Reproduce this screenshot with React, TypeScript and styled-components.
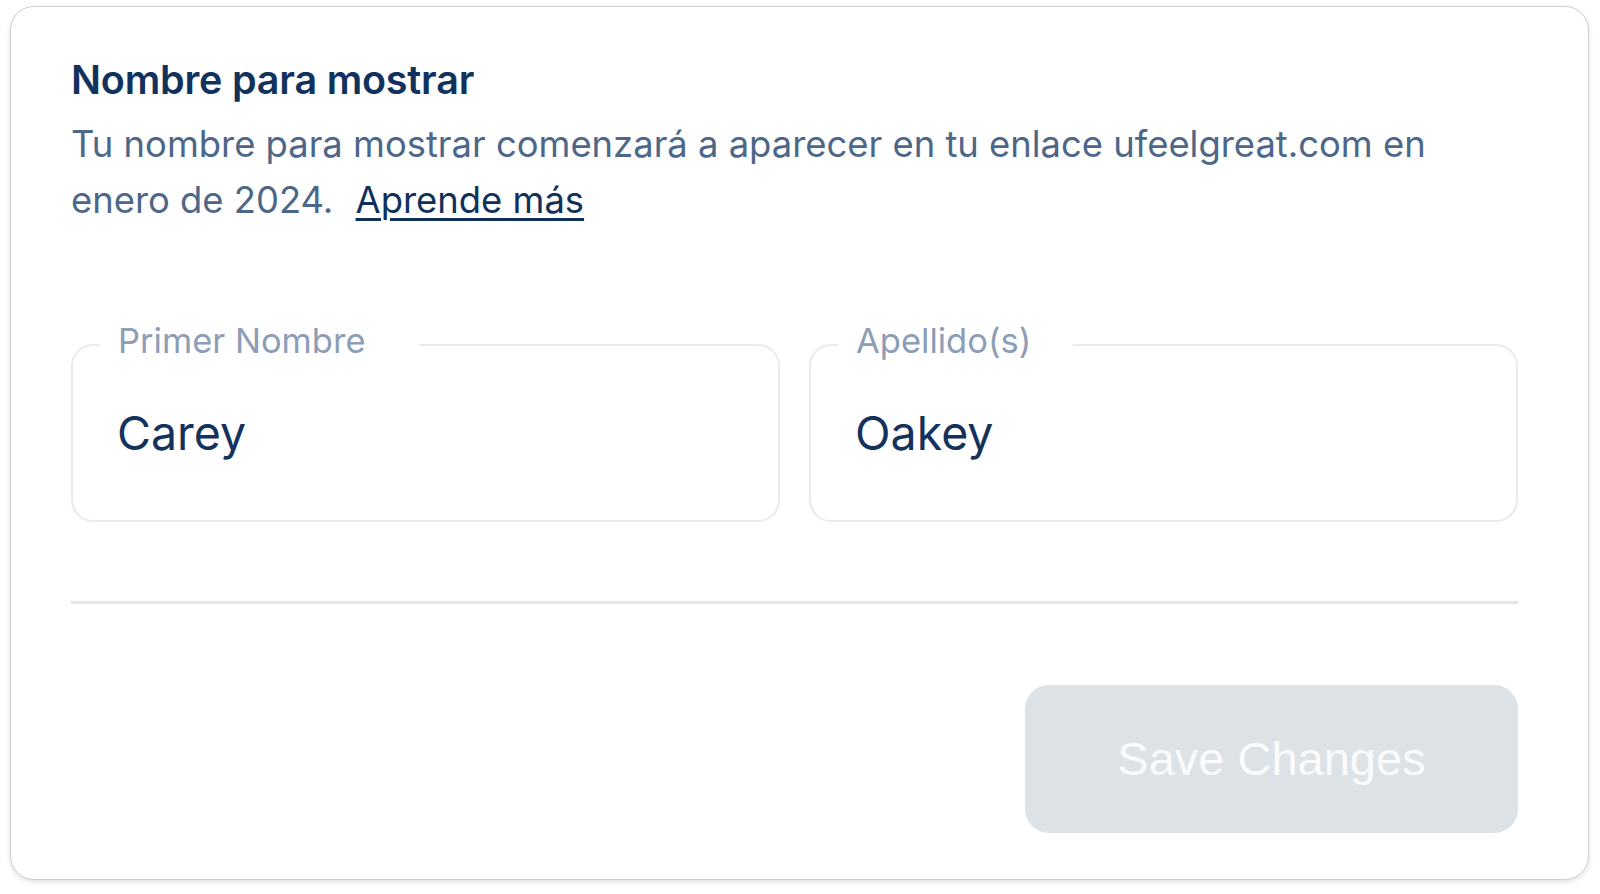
import React from "react";
import styled, { createGlobalStyle } from "styled-components";

const GlobalStyle = createGlobalStyle`
  html, body {
    margin: 0;
    padding: 0;
    background: #ffffff;
  }
  * { box-sizing: border-box; }
`;

const Page = styled.div`
  padding: 6px 11px 14px 10px;
  font-family: Inter, "Noto Sans", sans-serif;
`;

const Card = styled.section`
  background: #ffffff;
  border: 1px solid #cfcfcf;
  border-radius: 24px;
  box-shadow: 0 2px 5px rgba(0, 0, 0, 0.12);
  padding: 50px 70px 46px 60px;
  display: flex;
  flex-direction: column;
`;

const Title = styled.h2`
  margin: 0;
  font-size: 39.5px;
  line-height: 46.8px;
  font-weight: 600;
  color: #12325e;
  letter-spacing: -0.2px;
`;

const Description = styled.p`
  margin: 12px 0 0;
  font-size: 36.4px;
  line-height: 56px;
  font-weight: 400;
  color: #4d6788;
`;

const LearnLink = styled.a`
  margin-left: 12px;
  color: #10305c;
  text-decoration: underline;
  text-decoration-thickness: 2.5px;
  text-underline-offset: 5px;
  cursor: pointer;
`;

const Fields = styled.div`
  margin-top: 99px;
  display: grid;
  grid-template-columns: 1fr 1fr;
  gap: 29px;
`;

const Field = styled.fieldset`
  margin: 0;
  padding: 0 0 0 27px;
  border: 2px solid #e7eaee;
  border-radius: 22px;
  min-width: 0;
`;

const Legend = styled.legend<{ $tail: number }>`
  padding: 0 ${(p) => p.$tail}px 8px 18px;
  font-size: 34.5px;
  line-height: 28px;
  color: #8c9db5;
  font-weight: 400;
`;

const ValueInput = styled.input`
  display: block;
  width: 100%;
  margin: 42px 0 59px;
  padding: 0 0 0 17px;
  height: 56px;
  border: none;
  outline: none;
  background: transparent;
  font-family: Inter, "Noto Sans", sans-serif;
  font-size: 46.5px;
  line-height: 56px;
  color: #14325c;
`;

const Divider = styled.hr`
  margin: 79px 0 0;
  border: none;
  height: 3px;
  background: #e4e4e4;
`;

const Actions = styled.div`
  margin-top: 81px;
  display: flex;
  justify-content: flex-end;
`;

const SaveButton = styled.button`
  width: 493px;
  height: 148px;
  border: none;
  border-radius: 24px;
  background: #dde2e6;
  color: #fafbfc;
  font-family: "Liberation Sans", Arial, sans-serif;
  font-size: 47px;
  font-weight: 400;
  cursor: not-allowed;
`;

export default function App() {
  return (
    <>
      <GlobalStyle />
      <Page>
        <Card>
          <Title>Nombre para mostrar</Title>
          <Description>
            Tu nombre para mostrar comenzará a aparecer en tu enlace ufeelgreat.com en
            enero de 2024. <LearnLink>Aprende más</LearnLink>
          </Description>
          <Fields>
            <Field>
              <Legend $tail={53}>Primer Nombre</Legend>
              <ValueInput defaultValue="Carey" />
            </Field>
            <Field>
              <Legend $tail={42}>Apellido(s)</Legend>
              <ValueInput defaultValue="Oakey" />
            </Field>
          </Fields>
          <Divider />
          <Actions>
            <SaveButton disabled>Save Changes</SaveButton>
          </Actions>
        </Card>
      </Page>
    </>
  );
}
